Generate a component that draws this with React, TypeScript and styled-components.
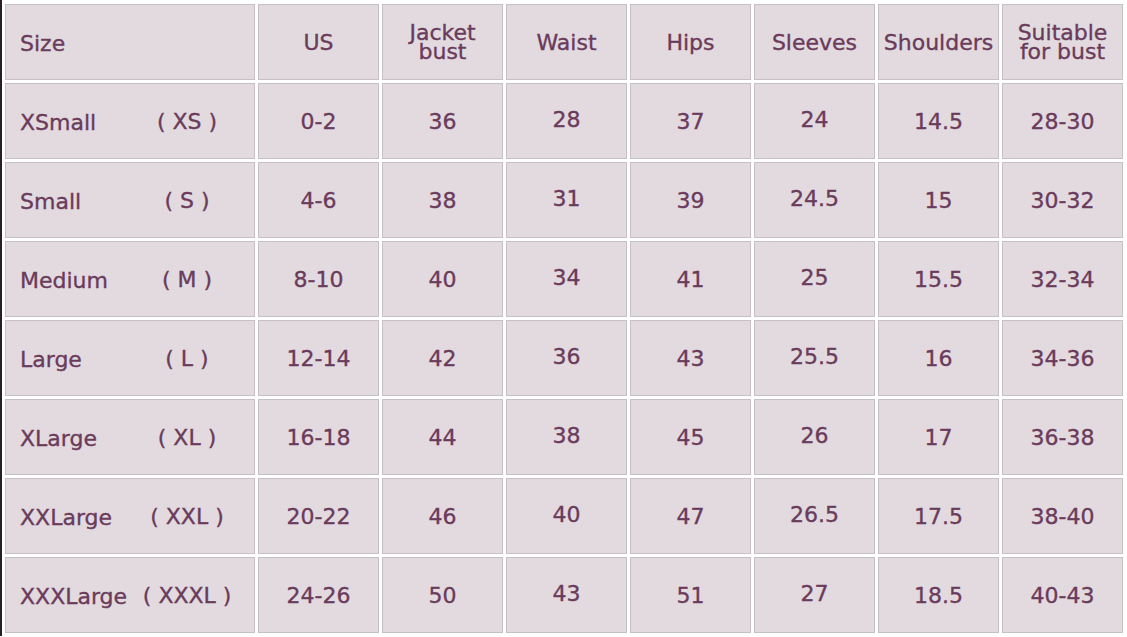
import React from 'react';
import styled, { createGlobalStyle } from 'styled-components';

const GlobalStyle = createGlobalStyle`
  html, body {
    margin: 0;
    padding: 0;
    background: #ffffff;
  }
  body {
    font-family: 'DejaVu Sans', 'Liberation Sans', sans-serif;
  }
`;

type Row = {
  name: string;
  code: string;
  values: string[];
};

const headers = ['US', 'Jacket\nbust', 'Waist', 'Hips', 'Sleeves', 'Shoulders', 'Suitable\nfor bust'];

const rows: Row[] = [
  { name: 'XSmall', code: '( XS )', values: ['0-2', '36', '28', '37', '24', '14.5', '28-30'] },
  { name: 'Small', code: '( S )', values: ['4-6', '38', '31', '39', '24.5', '15', '30-32'] },
  { name: 'Medium', code: '( M )', values: ['8-10', '40', '34', '41', '25', '15.5', '32-34'] },
  { name: 'Large', code: '( L )', values: ['12-14', '42', '36', '43', '25.5', '16', '34-36'] },
  { name: 'XLarge', code: '( XL )', values: ['16-18', '44', '38', '45', '26', '17', '36-38'] },
  { name: 'XXLarge', code: '( XXL )', values: ['20-22', '46', '40', '47', '26.5', '17.5', '38-40'] },
  { name: 'XXXLarge', code: '( XXXL )', values: ['24-26', '50', '43', '51', '27', '18.5', '40-43'] },
];

// columns whose figures sit a touch higher in the chart
const lifted = [2, 4];

const Page = styled.div`
  border-left: 2px solid #2b1c29;
  padding-top: 1px;
  min-height: 636px;
  box-sizing: border-box;
`;

const Chart = styled.div`
  display: grid;
  grid-template-columns: 250px repeat(7, 121px);
  grid-auto-rows: 76px;
  gap: 3px;
  padding: 3px;
  width: fit-content;
`;

const Cell = styled.div<{ $lift?: boolean }>`
  box-sizing: border-box;
  background: #e2dadf;
  border: 1px solid #c6bfc4;
  color: #6b3b5b;
  font-size: 22px;
  line-height: 19px;
  -webkit-text-stroke: 0.35px #6b3b5b;
  display: flex;
  align-items: center;
  justify-content: center;
  text-align: center;
  white-space: pre-line;
  padding-bottom: ${(p) => (p.$lift ? '3px' : '0')};
`;

const SizeCell = styled(Cell)`
  display: grid;
  grid-template-columns: 1fr 120px;
  align-items: center;
  justify-content: stretch;
  text-align: left;
  padding: 0 7px 0 14px;
`;

const Name = styled.span`
  padding-top: 3px;
`;

const Code = styled.span`
  text-align: center;
  white-space: pre;
`;

const App = () => {
  return (
    <>
      <GlobalStyle />
      <Page>
        <Chart>
          <SizeCell>
            <Name>Size</Name>
          </SizeCell>
          {headers.map((h) => (
            <Cell key={h}>{h}</Cell>
          ))}
          {rows.map((r) => (
            <React.Fragment key={r.name}>
              <SizeCell>
                <Name>{r.name}</Name>
                <Code>{r.code}</Code>
              </SizeCell>
              {r.values.map((v, i) => (
                <Cell key={i} $lift={lifted.includes(i)}>
                  {v}
                </Cell>
              ))}
            </React.Fragment>
          ))}
        </Chart>
      </Page>
    </>
  );
};

export default App;
